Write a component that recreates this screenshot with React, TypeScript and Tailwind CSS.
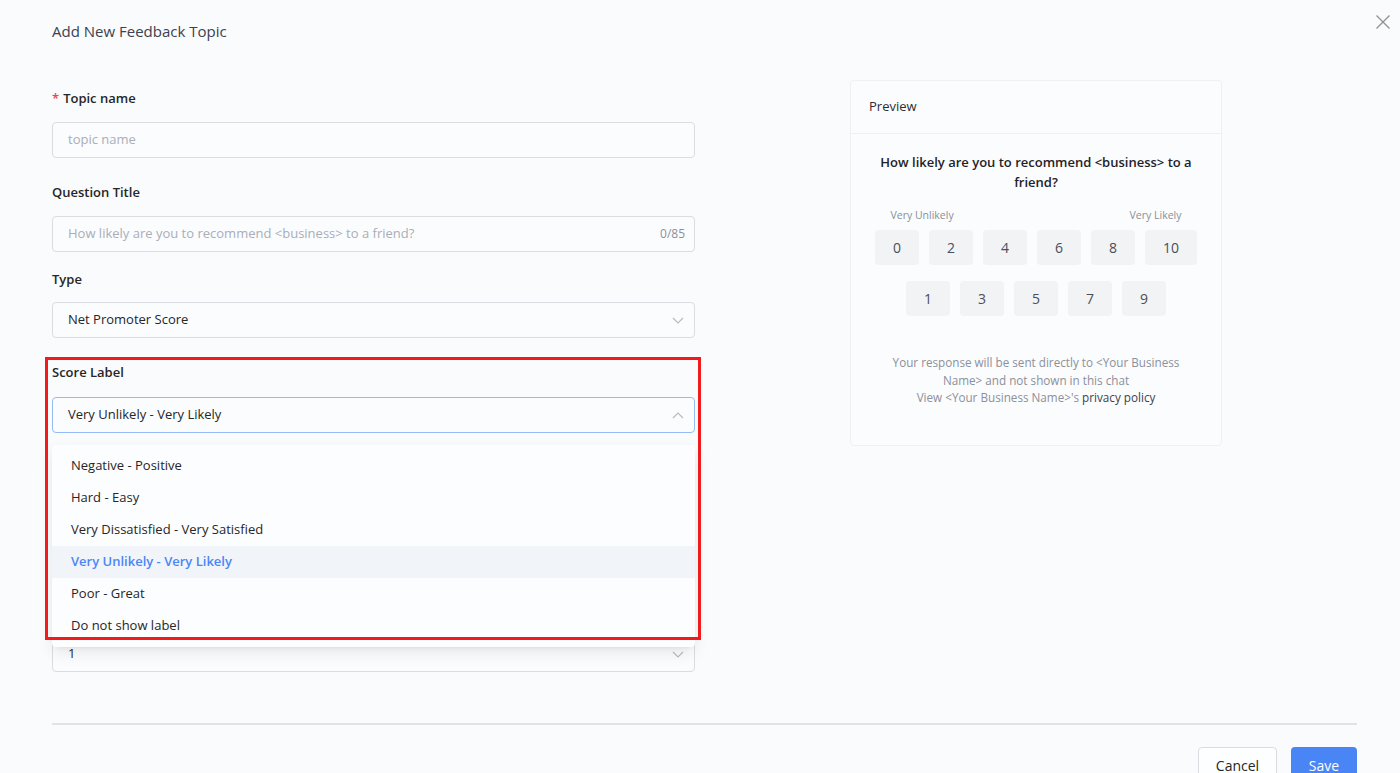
import React from "react";

const options = [
  "Negative - Positive",
  "Hard - Easy",
  "Very Dissatisfied - Very Satisfied",
  "Very Unlikely - Very Likely",
  "Poor - Great",
  "Do not show label",
];

function Chevron({ up = false }: { up?: boolean }) {
  return (
    <svg width="12" height="7" viewBox="0 0 12 7" fill="none" className="shrink-0">
      <polyline
        points={up ? "1,6 6,1 11,6" : "1,1 6,6 11,1"}
        stroke="#b5b9c0"
        strokeWidth="1.1"
        fill="none"
      />
    </svg>
  );
}

function ScoreBox({ n }: { n: number }) {
  return (
    <div className="h-[35px] min-w-[44px] px-[18px] rounded-[4px] bg-[#f2f3f5] flex items-center justify-center text-[14px] text-[#4a4f58]">
      {n}
    </div>
  );
}

export default function App() {
  return (
    <div className="relative h-[773px] overflow-hidden bg-[#f9fbfd] font-['Open_Sans','Noto_Sans',sans-serif] text-[#262626]">
      {/* Header */}
      <div className="px-[52px] pt-[20px] text-[15px] leading-[22px] text-[#3c4250]">
        Add New Feedback Topic
      </div>
      <button className="absolute top-[13px] right-[8px] p-[1px]">
        <svg width="16" height="16" viewBox="0 0 16 16">
          <line x1="1.5" y1="1.5" x2="14.5" y2="14.5" stroke="#8e9096" strokeWidth="1.3" />
          <line x1="14.5" y1="1.5" x2="1.5" y2="14.5" stroke="#8e9096" strokeWidth="1.3" />
        </svg>
      </button>

      {/* Body */}
      <div className="flex px-[52px] gap-[155px] mt-[38px]">
        {/* Form */}
        <div className="w-[643px] pt-[8px]">
          <div className="h-[20px] leading-[20px] text-[13px] font-semibold">
            <span className="text-[#f5424b] mr-[4px]">*</span>Topic name
          </div>
          <div className="mt-[14px] h-[36px] rounded-[4px] border border-[#d9dce1] bg-[#fbfcfe] px-[15px] flex items-center text-[13px] text-[#a9aeb8]">
            topic name
          </div>

          <div className="mt-[24px] h-[20px] leading-[20px] text-[13px] font-semibold">Question Title</div>
          <div className="mt-[14px] h-[36px] rounded-[4px] border border-[#d9dce1] bg-[#fbfcfe] pl-[15px] pr-[9px] flex items-center justify-between text-[13px] text-[#a9aeb8]">
            <span>How likely are you to recommend &lt;business&gt; to a friend?</span>
            <span className="text-[12px] text-[#8c9099]">0/85</span>
          </div>

          <div className="mt-[17px] h-[20px] leading-[20px] text-[13px] font-semibold">Type</div>
          <div className="mt-[13px] h-[36px] rounded-[4px] border border-[#d9dce1] bg-[#fbfcfe] pl-[15px] pr-[10px] flex items-center justify-between text-[13px]">
            <span>Net Promoter Score</span>
            <Chevron />
          </div>

          {/* Score label with open dropdown */}
          <div className="relative mt-[24px]">
            <div className="h-[20px] leading-[20px] text-[13px] font-semibold">Score Label</div>
            <div className="mt-[15px] h-[36px] rounded-[4px] border border-[#94bbf5] bg-[#fbfcfe] pl-[15px] pr-[10px] flex items-center justify-between text-[13px]">
              <span>Very Unlikely - Very Likely</span>
              <Chevron up />
            </div>

            <div className="absolute z-10 left-0 right-0 top-[83px] rounded-[4px] bg-[#fcfdfe] pt-[5px] pb-[5px] shadow-[0_3px_6px_-4px_rgba(0,0,0,0.12),0_6px_16px_0_rgba(0,0,0,0.08)]">
              {options.map((o) => {
                const active = o === "Very Unlikely - Very Likely";
                return (
                  <div
                    key={o}
                    className={`h-[32px] px-[19px] flex items-center text-[13px] ${
                      active ? "bg-[#f1f4f8] text-[#4a86f7] font-semibold" : "text-[#262626]"
                    }`}
                  >
                    {o}
                  </div>
                );
              })}
            </div>

            <div className="pointer-events-none absolute z-20 left-[-7px] top-[-5px] w-[656px] h-[283px] border-[3px] border-[#f21b1b]" />
          </div>

          <div className="h-[87px] mt-[58px]" />
          <div className="mt-[58px] h-[36px] rounded-[4px] border border-[#d9dce1] bg-[#fbfcfe] pl-[15px] pr-[10px] flex items-center justify-between text-[13px]">
            <span>1</span>
            <Chevron />
          </div>
        </div>

        {/* Preview */}
        <div className="w-[372px] h-[366px] rounded-[4px] border border-[#eef0f3] bg-[#fbfcfe]">
          <div className="h-[53px] px-[18px] flex items-center border-b border-[#eef0f3] text-[13px] text-[#2b2f36]">
            Preview
          </div>
          <div className="px-[22px] pt-[18px] flex flex-col items-center">
            <div className="text-center text-[13px] leading-[20px] font-semibold text-[#1f2329]">
              How likely are you to recommend &lt;business&gt; to a friend?
            </div>
            <div className="mt-[15px] w-[323px] px-[16px] flex justify-between text-[10.5px] leading-[16px] text-[#8a8f98]">
              <span>Very Unlikely</span>
              <span>Very Likely</span>
            </div>
            <div className="mt-[7px] flex gap-[10px]">
              {[0, 2, 4, 6, 8, 10].map((n) => (
                <ScoreBox key={n} n={n} />
              ))}
            </div>
            <div className="mt-[16px] flex gap-[10px]">
              {[1, 3, 5, 7, 9].map((n) => (
                <ScoreBox key={n} n={n} />
              ))}
            </div>
            <div className="mt-[38px] px-[3px] text-center text-[11.7px] leading-[17.5px] text-[#8c9099]">
              Your response will be sent directly to &lt;Your Business Name&gt; and not shown in this chat
              <br />
              View &lt;Your Business Name&gt;'s <span className="text-[#3c4250]">privacy policy</span>
            </div>
          </div>
        </div>
      </div>

      {/* Footer */}
      <div className="mx-[52px] mr-[43px] mt-[51px] border-t-[2px] border-[#e1e3e8]" />
      <div className="mr-[43px] mt-[22px] flex justify-end gap-[14px]">
        <button className="h-[36px] w-[79px] rounded-[4px] border border-[#d9dce1] bg-[#fdfeff] text-[14px] text-[#262626]">
          Cancel
        </button>
        <button className="h-[36px] w-[66px] rounded-[4px] bg-[#4a85f6] text-[14px] text-white">
          Save
        </button>
      </div>
    </div>
  );
}
